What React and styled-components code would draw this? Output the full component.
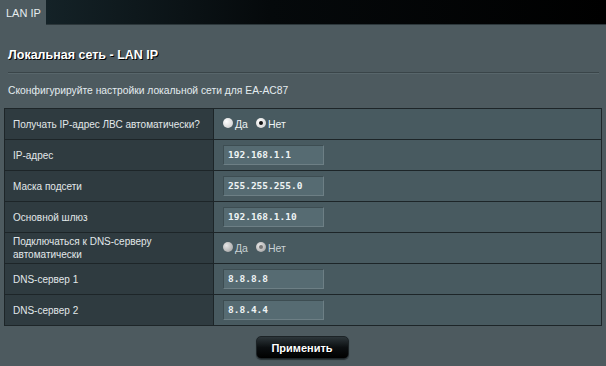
import React from "react";
import styled, { createGlobalStyle } from "styled-components";

const GlobalStyle = createGlobalStyle`
  html, body {
    margin: 0;
    padding: 0;
    background: #4d5a5f;
    font-family: "Liberation Sans", Arial, sans-serif;
  }
`;

const Page = styled.div`
  width: 606px;
  height: 366px;
  overflow: hidden;
  background: #4d5a5f;
  color: #fff;
`;

const TopBar = styled.div`
  display: flex;
  height: 25px;
`;

const Tab = styled.div`
  width: 46px;
  display: flex;
  align-items: center;
  padding-left: 6px;
  box-sizing: border-box;
  font-size: 11px;
  color: #e6ecee;
  background: #4d5a5f;
`;

const TabFill = styled.div`
  flex: 1;
  background: linear-gradient(to right, #142227 0%, #05090b 40%, #000 100%);
  border-bottom: 1px solid #2c373b;
`;

const Title = styled.h1`
  margin: 0;
  padding: 22px 0 0 8px;
  height: 47px;
  box-sizing: border-box;
  font-size: 12.5px;
  font-weight: bold;
  color: #fff;
  text-shadow: 1px 1px 0 #000;
  line-height: 16px;
`;

const Separator = styled.div`
  margin: 0 7px 0 8px;
  height: 1px;
  background: #3a4549;
  border-bottom: 1px solid #58666b;
`;

const Description = styled.p`
  margin: 0;
  padding: 11px 0 0 8px;
  height: 34px;
  box-sizing: border-box;
  font-size: 10.3px;
  color: #e4ecef;
`;

const Table = styled.div`
  margin: 0 4px;
  border: 1px solid #1d2528;
  background: #1d2528;
  display: flex;
  flex-direction: column;
  gap: 1px;
`;

const Row = styled.div`
  display: grid;
  grid-template-columns: 208px 1fr;
  gap: 1px;
  height: 30px;
`;

const Label = styled.div`
  background: #2f3b40;
  display: flex;
  align-items: center;
  padding-left: 8px;
  font-size: 10px;
  line-height: 13px;
  color: #e2e8ea;
  white-space: nowrap;
`;

const Value = styled.div`
  background: #485a60;
  display: flex;
  align-items: center;
  padding-left: 9px;
`;

const Input = styled.div`
  width: 101px;
  height: 20px;
  box-sizing: border-box;
  background: #566b72;
  border: 1px solid #3d4d52;
  border-bottom-color: #6d7f85;
  border-right-color: #6d7f85;
  font-family: "DejaVu Sans Mono", "Liberation Mono", monospace;
  font-weight: bold;
  font-size: 9.5px;
  color: #eef3f4;
  padding-left: 4px;
  line-height: 18px;
`;

const RadioGroup = styled.div`
  display: flex;
  align-items: center;
  font-size: 10.5px;
  color: ${p => (p.$disabled ? "#c9d2d5" : "#eef3f4")};
`;

const RadioDot = styled.span`
  width: 10px;
  height: 10px;
  border-radius: 50%;
  background: ${p => (p.$disabled ? "radial-gradient(circle at 35% 35%, #e6e6e6, #9a9a9a)" : "radial-gradient(circle at 35% 35%, #fff, #c8c8c8)")};
  display: inline-flex;
  align-items: center;
  justify-content: center;
  margin-right: 2px;
  margin-top: -2px;
  &::after {
    content: "";
    width: 4px;
    height: 4px;
    border-radius: 50%;
    background: ${p => (p.$checked ? (p.$disabled ? "#777" : "#111") : "transparent")};
  }
`;

const RadioLabel = styled.span`
  margin-right: 8px;
`;

const Footer = styled.div`
  display: flex;
  justify-content: center;
  padding-top: 10px;
  padding-right: 2px;
`;

const Button = styled.button`
  width: 93px;
  height: 23px;
  border-radius: 5px;
  border: 1px solid #1c2326;
  background: linear-gradient(to bottom, #2d363a 0%, #0b0f11 50%, #000 100%);
  box-shadow: 0 1px 1px #2a3236;
  color: #fff;
  font-family: "Liberation Sans", Arial, sans-serif;
  font-weight: bold;
  font-size: 11px;
  text-shadow: 1px 1px 0 #000;
  padding: 0;
`;

const Radio = ({ options, checked, disabled }) => (
  <RadioGroup $disabled={disabled}>
    {options.map(opt => (
      <React.Fragment key={opt}>
        <RadioDot $checked={opt === checked} $disabled={disabled} />
        <RadioLabel>{opt}</RadioLabel>
      </React.Fragment>
    ))}
  </RadioGroup>
);

const rows = [
  { label: ["Получать IP-адрес ЛВС автоматически?"], radio: true, checked: "Нет" },
  { label: ["IP-адрес"], value: "192.168.1.1" },
  { label: ["Маска подсети"], value: "255.255.255.0" },
  { label: ["Основной шлюз"], value: "192.168.1.10" },
  { label: ["Подключаться к DNS-серверу", "автоматически"], radio: true, checked: "Нет", disabled: true },
  { label: ["DNS-сервер 1"], value: "8.8.8.8" },
  { label: ["DNS-сервер 2"], value: "8.8.4.4" }
];

export default function App() {
  return (
    <Page>
      <GlobalStyle />
      <TopBar>
        <Tab>LAN IP</Tab>
        <TabFill />
      </TopBar>
      <Title>Локальная сеть - LAN IP</Title>
      <Separator />
      <Description>Сконфигурируйте настройки локальной сети для EA-AC87</Description>
      <Table>
        {rows.map(row => (
          <Row key={row.label.join(" ")}>
            <Label>
              <span>
                {row.label.map((line, i) => (
                  <React.Fragment key={line}>
                    {i > 0 && <br />}
                    {line}
                  </React.Fragment>
                ))}
              </span>
            </Label>
            <Value>
              {row.radio ? (
                <Radio options={["Да", "Нет"]} checked={row.checked} disabled={row.disabled} />
              ) : (
                <Input>{row.value}</Input>
              )}
            </Value>
          </Row>
        ))}
      </Table>
      <Footer>
        <Button type="button">Применить</Button>
      </Footer>
    </Page>
  );
}
